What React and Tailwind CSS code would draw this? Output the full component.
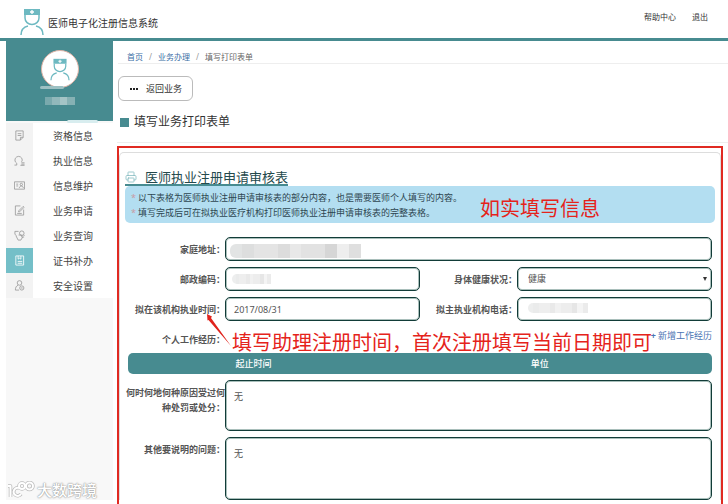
import React, { useState } from 'react';
import { Printer } from 'lucide-react';

const menuItems = [
  { label: '资格信息', icon: 'note' },
  { label: '执业信息', icon: 'badge' },
  { label: '信息维护', icon: 'card' },
  { label: '业务申请', icon: 'edit' },
  { label: '业务查询', icon: 'query' },
  { label: '证书补办', icon: 'book', active: true },
  { label: '安全设置', icon: 'user' },
];

const iconShapes = {
  note: (
    <>
      <path d="M2 1h8v7l-3 3H2z" />
      <path d="M10 8H7v3M4 4h4M4 6h4" />
    </>
  ),
  badge: (
    <>
      <path d="M.5 11H3V9a4 4 0 1 1 6-3.500c0 1-.5 1.500-1 2" />
      <path d="M8 8.500h3.500M8 10h3.500M7 11.300h4.500" />
    </>
  ),
  card: (
    <>
      <path d="M.5 2h11v8H.5zM2.500 4.500h2M2.500 6.500h2" />
      <circle cx="8" cy="4.900" r="1.300" />
      <path d="M5.800 8.800c.3-3 4.100-3 4.400 0" />
    </>
  ),
  edit: (
    <>
      <path d="M10.500 5v6h-9V1H7" />
      <path d="M5 6.500 10 1.500l1 1-5 5H5zM3.500 9.200h5" />
    </>
  ),
  query: (
    <>
      <circle cx="8.500" cy="3.500" r="2.500" />
      <path d="M5 1.500H1v3l1.500 1.500M2 6l2.500 5h3l2-3.500M5 5.500h3.500v2.200H11M10.300 5.300l1.200 1.200" />
    </>
  ),
  book: (
    <>
      <path d="M2 1h8.500v10H2z" />
      <path d="M4.500 1v3.500L6 3.500l1.500 1V1M4 7h5M4 9h5" />
    </>
  ),
  user: (
    <>
      <circle cx="6" cy="3.200" r="2.500" />
      <path d="M5.500 11H1.500c0-3 1-4.500 3-5.300" />
      <circle cx="8.500" cy="8.700" r="2.300" />
      <path d="M7.500 8.700h2" />
    </>
  ),
};

function MenuIcon({ name }) {
  return (
    <svg viewBox="0 0 12 12" className="size-[11px]" fill="none" stroke="currentColor" strokeWidth="0.900">
      {iconShapes[name]}
    </svg>
  );
}

function Doctor({ className }) {
  return (
    <svg viewBox="0 0 24 28" className={className} fill="none" stroke="#6db9c1" strokeWidth="1.500">
      <path d="M4 1h16v6H4z" fill="#6db9c1" stroke="none" />
      <path d="M5 7v3a7 6.500 0 0 0 14 0V7" />
      <path d="M1 27c0-5 3-8 7-9M16 18c4 1 7 4 7 9" />
      <path d="M12 2v4M10 4h4" stroke="#fff" strokeWidth="1.300" />
    </svg>
  );
}

// grey blocks over private values
function Mosaic({ className }) {
  return (
    <span className={`absolute flex overflow-hidden rounded-l-md ${className}`} aria-hidden="true">
      <i className="flex-1 bg-[#e2e4e4]" />
      <i className="flex-1 bg-[#dddede]" />
      <i className="flex-[2] bg-[#e4e4e4]" />
      <i className="flex-1 bg-[#dcdcdc]" />
      <i className="flex-1 bg-[#e8e8e8]" />
      <i className="flex-[2] bg-[#e2e2e2]" />
      <i className="flex-1 bg-[#d6d6d6]" />
      <i className="flex-1 bg-[#eeeeee]" />
      <i className="flex-1 bg-[#dfdfdf]" />
    </span>
  );
}

const fieldClass =
  'block w-full rounded-[5px] border border-[#123c38] bg-white px-2 text-[9px] text-[#555] shadow-[inset_0_0_0_1px_#a9bfbb] outline-none';

function Label({ htmlFor, children, className = 'w-[97px]' }) {
  return (
    <label htmlFor={htmlFor} className={`shrink-0 text-right text-[9px] leading-[15px] font-bold text-[#555] ${className}`}>
      {children}
    </label>
  );
}

function Sidebar() {
  return (
    <aside className="mb-1 ml-1.5 flex w-[107px] shrink-0 flex-col bg-[#f8f8f8]">
      <div className="relative flex h-20 flex-col items-center bg-[#478b90] pt-[9px]">
        <div className="flex size-[38px] items-center justify-center rounded-full border border-[#dfb3a6] bg-white">
          <Doctor className="h-[23px] w-5" />
        </div>
        <span className="-mt-0.5 mr-4 flex h-[3px] w-[24px] rounded-full bg-[#9dc0c2]" />
        <span className="mt-2 flex h-2 w-[30px]">
          <i className="flex-1 bg-[#79a9ad]" />
          <i className="flex-1 bg-[#91b8bb]" />
          <i className="flex-1 bg-[#a4c4c6]" />
          <i className="flex-1 bg-[#86b1b4]" />
        </span>
        <span className="absolute -bottom-0.5 left-[61px] h-[3px] w-[31px] rounded-full bg-[#d8edef]" />
      </div>
      <nav className="pt-0.5">
        {menuItems.map((item) => (
          <a key={item.label} href="#" className="flex h-[25px] items-center bg-white text-[10px] text-[#444]">
            <span
              className={`flex h-full w-[27px] items-center justify-center ${
                item.active ? 'bg-[#74bfc8] text-white' : 'bg-[#f3f3f3] text-[#999]'
              }`}
            >
              <MenuIcon name={item.icon} />
            </span>
            <span className="pt-px pl-5">{item.label}</span>
          </a>
        ))}
      </nav>
    </aside>
  );
}

function FormPanel() {
  const [date, setDate] = useState('2017/08/31');

  return (
    <form className="px-[3px] pt-[14px]">
      <div className="space-y-1.5">
        <div className="flex items-center">
          <Label htmlFor="address">家庭地址：</Label>
          <div className="relative flex-1">
            <input id="address" className={`${fieldClass} h-6`} />
            <Mosaic className="top-[7px] left-[5px] h-[14px] w-[131px]" />
          </div>
        </div>

        <div className="flex items-center">
          <Label htmlFor="postcode">邮政编码：</Label>
          <div className="relative flex-1">
            <input id="postcode" className={`${fieldClass} h-6`} />
            <Mosaic className="top-[7px] left-[7px] h-[10px] w-[39px] opacity-60" />
          </div>
          <Label htmlFor="health">身体健康状况：</Label>
          <div className="relative flex-1">
            <select id="health" className={`${fieldClass} h-6 appearance-none pl-2.5`}>
              <option>健康</option>
            </select>
            <span className="pointer-events-none absolute top-[10px] right-[5px] border-x-2 border-t-4 border-x-transparent border-t-[#333]" />
          </div>
        </div>

        <div className="flex items-center">
          <Label htmlFor="date">拟在该机构执业时间：</Label>
          <div className="relative flex-1">
            <input id="date" value={date} onChange={(e) => setDate(e.target.value)} className={`${fieldClass} h-6`} />
          </div>
          <Label htmlFor="phone">拟主执业机构电话：</Label>
          <div className="relative flex-1">
            <input id="phone" className={`${fieldClass} h-6`} />
            <Mosaic className="top-[6px] left-[11px] h-[10px] w-[60px] opacity-60" />
          </div>
        </div>
      </div>

      <div className="relative flex h-8 justify-between">
        <div className="flex pt-[11px]">
          <span className="w-[97px] text-right text-[9px] leading-[15px] font-bold text-[#555]">个人工作经历：</span>
        </div>
        <a href="#" className="flex gap-0.5 pt-[7px] text-[9px] leading-[15px] text-[#4a74b4]">
          <b>+</b>
          <span>新增工作经历</span>
        </a>
        <p className="absolute top-[10px] left-[104px] text-[20px] leading-6 whitespace-nowrap text-[#e5231b]">
          填写助理注册时间，首次注册填写当前日期即可
        </p>
        <svg className="absolute -top-2 left-[78px] h-9 w-7" viewBox="0 0 28 36" fill="#e0241d">
          <path d="M1 1l5 2.500-1 1.500L25 33 2.500 7 1.500 7.500z" />
        </svg>
      </div>

      <table className="w-full table-fixed text-[9px] text-white">
        <thead>
          <tr className="h-[21px]">
            <th className="w-[43%] rounded-l-[5px] bg-[#478b90] p-0 font-medium">起止时间</th>
            <th className="w-[55%] bg-[#478b90] p-0 font-medium">单位</th>
            <th className="rounded-r-[5px] bg-[#478b90] p-0" />
          </tr>
        </thead>
      </table>

      <div className="mt-1.5 space-y-1.5">
        <div className="flex">
          <Label htmlFor="penalty" className="-ml-0.5 w-[99px] pt-[5px]">
            何时何地何种原因受过何种处罚或处分：
          </Label>
          <textarea id="penalty" defaultValue="无" className={`${fieldClass} h-[51px] resize-none pt-2 leading-[15px]`} />
        </div>
        <div className="flex">
          <Label htmlFor="other" className="w-[97px] pt-[5px]">其他要说明的问题：</Label>
          <textarea id="other" defaultValue="无" className={`${fieldClass} h-[63px] resize-none pt-2 leading-[15px]`} />
        </div>
      </div>
    </form>
  );
}

export default function App() {
  return (
    <div className="relative flex h-screen flex-col overflow-hidden bg-white font-['Noto_Sans','Noto_Sans_CJK_SC',sans-serif] text-[#333]">
      <header className="flex h-[41px] shrink-0 items-start justify-between border-b-[3px] border-[#478b90] pr-5 pl-5">
        <div className="flex items-center gap-1 pt-2">
          <Doctor className="h-7 w-6" />
          <h1 className="pt-0.5 text-[10px] leading-[15px]">医师电子化注册信息系统</h1>
        </div>
        <nav className="flex gap-4 pt-2.5 text-[8px] leading-[13px]">
          <a href="#">帮助中心</a>
          <a href="#">退出</a>
        </nav>
      </header>

      <div className="flex min-h-0 flex-1">
        <Sidebar />

        <main className="ml-1 min-w-0 flex-1">
          <nav className="ml-px flex gap-1.5 border-b border-[#eee] pt-[9px] pl-[9px] text-[8px] leading-[13px] text-[#3a6ea5]">
            <a href="#">首页</a>
            <span className="text-[#999]">/</span>
            <a href="#">业务办理</a>
            <span className="text-[#999]">/</span>
            <span className="text-[#666]">填写打印表单</span>
          </nav>

          <button type="button" className="mt-3 ml-px flex h-[25px] w-[75px] items-center gap-2 rounded-[6px] border border-[#bbb] bg-white pl-[11px] text-[9px]">
            <span className="flex gap-px">
              <i className="size-0.5 bg-[#222]" />
              <i className="size-0.5 bg-[#222]" />
              <i className="size-0.5 bg-[#222]" />
            </span>
            返回业务
          </button>

          <div className="mt-[13px] flex items-center gap-[5px] border-b border-[#eee] pb-3 pl-[3px]">
            <span className="size-[9px] bg-[#478b90]" />
            <h2 className="text-[12px] leading-4">填写业务打印表单</h2>
          </div>

          <section className="mt-[3px] mr-[5px] border-2 border-[#e02a22] pt-1 pb-6">
            <div className="rounded-t-[5px] border border-b-0 border-[#ddd] px-[5px] pt-[17px]">
              <div className="flex">
                <h3 className="flex items-center gap-2 border-b-2 border-[#478b90] text-[13px] leading-[14px] text-[#24494c]">
                  <Printer size={12} strokeWidth={1.5} className="text-[#7fb8bd]" />
                  医师执业注册申请审核表
                </h3>
              </div>
              <div className="relative rounded-[5px] bg-[#b3def1] pt-1 pb-[3px] pl-1.5 text-[9px] leading-[15px] text-[#2e4650]">
                <ul>
                  <li className="flex gap-0.5"><span className="text-[#c99aa5]">*</span>以下表格为医师执业注册申请审核表的部分内容，也是需要医师个人填写的内容。</li>
                  <li className="flex gap-0.5"><span className="text-[#c99aa5]">*</span>填写完成后可在拟执业医疗机构打印医师执业注册申请审核表的完整表格。</li>
                </ul>
                <p className="absolute top-[11px] left-[355px] text-[20px] leading-6 text-[#e5231b]">如实填写信息</p>
              </div>
              <FormPanel />
            </div>
          </section>
        </main>
      </div>

      <div className="absolute bottom-1 left-[7px] flex items-center gap-0.5 text-white">
        <svg viewBox="0 0 28 18" className="h-[18px] w-7" fill="none" strokeLinejoin="round">
          <g stroke="#bbb" strokeWidth="3.500">
            <path d="M1 5h2.500v11M14 13a4 4 0 1 1-2-6" />
            <circle cx="15" cy="5" r="3" />
            <circle cx="22.500" cy="5" r="3.500" />
          </g>
          <g stroke="#fff" strokeWidth="2">
            <path d="M1 5h2.500v11M14 13a4 4 0 1 1-2-6" />
            <circle cx="15" cy="5" r="3" />
            <circle cx="22.500" cy="5" r="3.500" />
          </g>
        </svg>
        <span className="text-[15px] leading-5 font-medium [text-shadow:0_0_1px_#888,0_0_2px_#999]">大数跨境</span>
      </div>
    </div>
  );
}
